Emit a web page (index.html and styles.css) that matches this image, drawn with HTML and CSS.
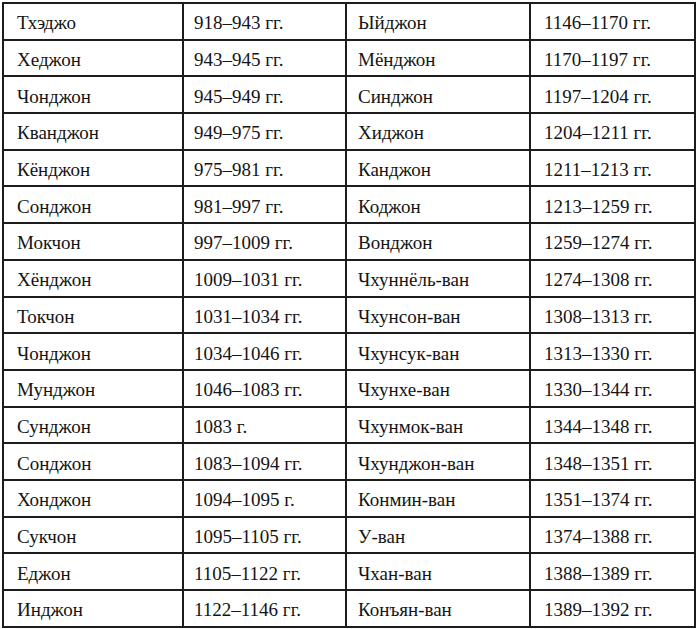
FILE: index.html
```html
<!DOCTYPE html>
<html lang="ru">
<head>
<meta charset="utf-8">
<title>Правители Корё</title>
<link rel="stylesheet" href="styles.css">
</head>
<body>
<div class="page">
<table class="rulers">
<colgroup>
<col class="c-name1"><col class="c-date1"><col class="c-name2"><col class="c-date2">
</colgroup>
<tbody>
<tr><td class="n1">Тхэджо</td><td class="d1">918–943 гг.</td><td class="n2">Ыйджон</td><td class="d2">1146–1170 гг.</td></tr>
<tr><td class="n1">Хеджон</td><td class="d1">943–945 гг.</td><td class="n2">Мёнджон</td><td class="d2">1170–1197 гг.</td></tr>
<tr><td class="n1">Чонджон</td><td class="d1">945–949 гг.</td><td class="n2">Синджон</td><td class="d2">1197–1204 гг.</td></tr>
<tr><td class="n1">Кванджон</td><td class="d1">949–975 гг.</td><td class="n2">Хиджон</td><td class="d2">1204–1211 гг.</td></tr>
<tr><td class="n1">Кёнджон</td><td class="d1">975–981 гг.</td><td class="n2">Канджон</td><td class="d2">1211–1213 гг.</td></tr>
<tr><td class="n1">Сонджон</td><td class="d1">981–997 гг.</td><td class="n2">Коджон</td><td class="d2">1213–1259 гг.</td></tr>
<tr><td class="n1">Мокчон</td><td class="d1">997–1009 гг.</td><td class="n2">Вонджон</td><td class="d2">1259–1274 гг.</td></tr>
<tr><td class="n1">Хёнджон</td><td class="d1">1009–1031 гг.</td><td class="n2">Чхуннёль-ван</td><td class="d2">1274–1308 гг.</td></tr>
<tr><td class="n1">Токчон</td><td class="d1">1031–1034 гг.</td><td class="n2">Чхунсон-ван</td><td class="d2">1308–1313 гг.</td></tr>
<tr><td class="n1">Чонджон</td><td class="d1">1034–1046 гг.</td><td class="n2">Чхунсук-ван</td><td class="d2">1313–1330 гг.</td></tr>
<tr><td class="n1">Мунджон</td><td class="d1">1046–1083 гг.</td><td class="n2">Чхунхе-ван</td><td class="d2">1330–1344 гг.</td></tr>
<tr><td class="n1">Сунджон</td><td class="d1">1083 г.</td><td class="n2">Чхунмок-ван</td><td class="d2">1344–1348 гг.</td></tr>
<tr><td class="n1">Сонджон</td><td class="d1">1083–1094 гг.</td><td class="n2">Чхунджон-ван</td><td class="d2">1348–1351 гг.</td></tr>
<tr><td class="n1">Хонджон</td><td class="d1">1094–1095 г.</td><td class="n2">Конмин-ван</td><td class="d2">1351–1374 гг.</td></tr>
<tr><td class="n1">Сукчон</td><td class="d1">1095–1105 гг.</td><td class="n2">У-ван</td><td class="d2">1374–1388 гг.</td></tr>
<tr><td class="n1">Еджон</td><td class="d1">1105–1122 гг.</td><td class="n2">Чхан-ван</td><td class="d2">1388–1389 гг.</td></tr>
<tr><td class="n1">Инджон</td><td class="d1">1122–1146 гг.</td><td class="n2">Конъян-ван</td><td class="d2">1389–1392 гг.</td></tr>
</tbody>
</table>
</div>
</body>
</html>
```

FILE: styles.css
```css
html, body {
  margin: 0;
  padding: 0;
  background: #ffffff;
}

.page {
  padding: 2px 0 0 2px;
}

.rulers {
  border-collapse: collapse;
  table-layout: fixed;
  width: 692px;
  font-family: "Liberation Serif", "Times New Roman", serif;
  font-size: 19px;
  color: #141414;
}

.c-name1 { width: 180px; }
.c-date1 { width: 163px; }
.c-name2 { width: 184px; }
.c-date2 { width: 165px; }

.rulers tr {
  height: 36.7px;
}

.rulers td {
  border: 2px solid #1c1c1c;
  padding: 3px 0 0 0;
  vertical-align: middle;
  white-space: nowrap;
  line-height: 1;
}

.rulers td.n1 { padding-left: 13px; }
.rulers td.d1 { padding-left: 10px; }
.rulers td.n2 { padding-left: 11px; }
.rulers td.d2 { padding-left: 13px; }
```
